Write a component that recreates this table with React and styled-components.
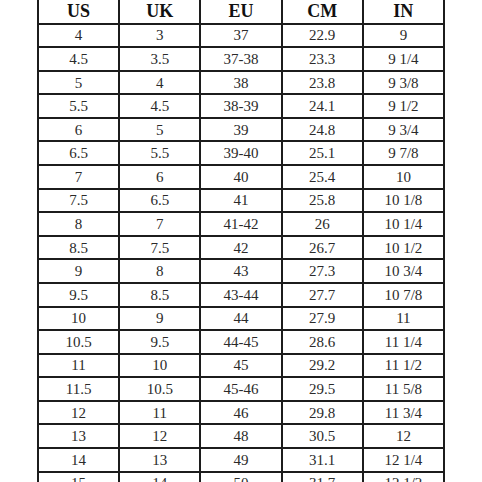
import React from 'react'
import styled, { createGlobalStyle } from 'styled-components'

const GlobalStyle = createGlobalStyle`
  html, body {
    margin: 0;
    padding: 0;
    background: #fff;
  }
  body {
    width: 482px;
    height: 482px;
    overflow: hidden;
  }
`

const sizes = [
  ['4', '3', '37', '22.9', '9'],
  ['4.5', '3.5', '37-38', '23.3', '9 1/4'],
  ['5', '4', '38', '23.8', '9 3/8'],
  ['5.5', '4.5', '38-39', '24.1', '9 1/2'],
  ['6', '5', '39', '24.8', '9 3/4'],
  ['6.5', '5.5', '39-40', '25.1', '9 7/8'],
  ['7', '6', '40', '25.4', '10'],
  ['7.5', '6.5', '41', '25.8', '10 1/8'],
  ['8', '7', '41-42', '26', '10 1/4'],
  ['8.5', '7.5', '42', '26.7', '10 1/2'],
  ['9', '8', '43', '27.3', '10 3/4'],
  ['9.5', '8.5', '43-44', '27.7', '10 7/8'],
  ['10', '9', '44', '27.9', '11'],
  ['10.5', '9.5', '44-45', '28.6', '11 1/4'],
  ['11', '10', '45', '29.2', '11 1/2'],
  ['11.5', '10.5', '45-46', '29.5', '11 5/8'],
  ['12', '11', '46', '29.8', '11 3/4'],
  ['13', '12', '48', '30.5', '12'],
  ['14', '13', '49', '31.1', '12 1/4'],
  ['15', '14', '50', '31.7', '12 1/2'],
]

const headers = ['US', 'UK', 'EU', 'CM', 'IN']

const SizeChart = () => {
  return (
    <Wrapper>
      <table>
        <thead>
          <tr>
            {headers.map((h) => (
              <th key={h}>{h}</th>
            ))}
          </tr>
        </thead>
        <tbody>
          {sizes.map((row, rowIndex) => (
            <tr key={rowIndex}>
              {row.map((cell, cellIndex) => (
                <td key={cellIndex}>{cell}</td>
              ))}
            </tr>
          ))}
        </tbody>
      </table>
    </Wrapper>
  )
}

const Wrapper = styled.div`
  padding-left: 37px;
  margin-top: -2px;

  table {
    border-collapse: collapse;
    table-layout: fixed;
    width: 408px;
    font-family: 'Liberation Serif', 'Times New Roman', serif;
    color: #2a2a2a;
  }

  th,
  td {
    border: 2px solid #1c1c1c;
    padding: 0;
    text-align: center;
    vertical-align: middle;
    line-height: 1;
  }

  th {
    border-top-color: #fff;
  }

  tr {
    height: 23.58px;
  }

  thead tr {
    height: 24.6px;
  }

  th {
    font-size: 18px;
    font-weight: bold;
    color: #111;
  }

  td {
    font-size: 15px;
    padding-top: 1px;
  }
`

export default function App() {
  return (
    <>
      <GlobalStyle />
      <SizeChart />
    </>
  )
}
